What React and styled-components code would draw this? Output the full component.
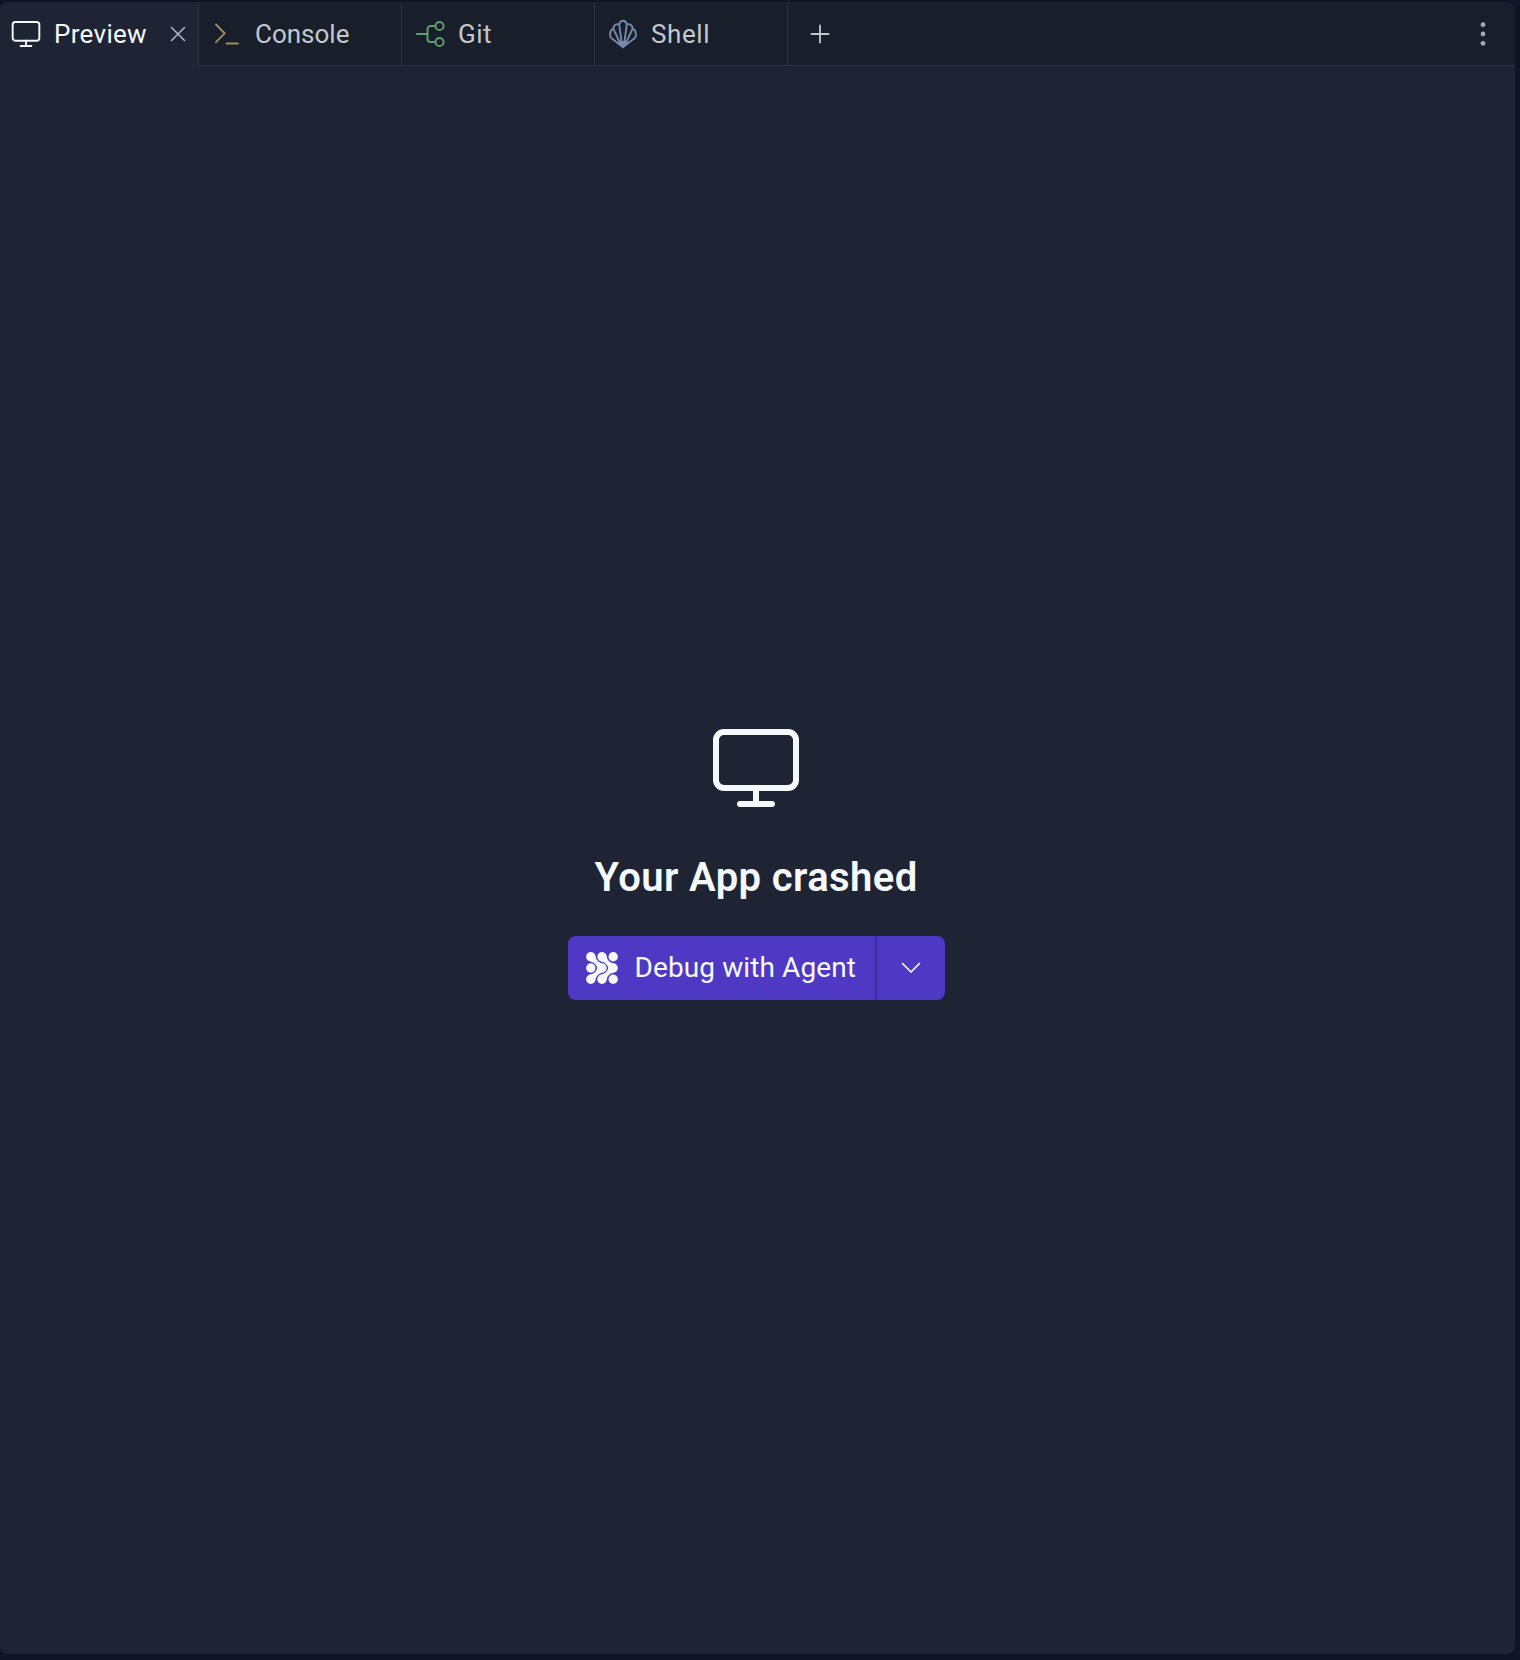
import React from "react";
import styled, { createGlobalStyle } from "styled-components";

const Global = createGlobalStyle`
  * { box-sizing: border-box; }
  body {
    margin: 0;
    background: #0f1524;
    font-family: Roboto, "Liberation Sans", sans-serif;
  }
`;

const Page = styled.div`
  height: 1660px;
  padding: 2px 5px 6px 0;
  background: #0f1524;
`;

const Panel = styled.main`
  display: flex;
  flex-direction: column;
  height: 100%;
  border-radius: 8px;
  overflow: hidden;
  background: #1e2433;
`;

const TabBar = styled.div`
  display: flex;
  flex: none;
  height: 64px;
  background: #191e2b;
`;

const Tab = styled.div`
  display: flex;
  align-items: center;
  flex: none;
  width: ${(p) => p.$width}px;
  padding-left: ${(p) => p.$pad}px;
  gap: 12px;
  border-right: 1px solid #2b3245;
  border-bottom: 1px solid ${(p) => (p.$active ? "#1e2433" : "#2b3245")};
  background: ${(p) => (p.$active ? "#1e2433" : "transparent")};
  color: ${(p) => (p.$active ? "#f5f9fc" : "#c2c8cc")};
`;

const TabLabel = styled.span`
  font-size: 26px;
  line-height: 32px;
  letter-spacing: ${(p) => p.$track || 0}px;
  white-space: nowrap;
`;

const Close = styled.button`
  display: flex;
  margin: 0 0 0 auto;
  padding: 0 12px 0 0;
  border: 0;
  background: none;
  color: #b4bac2;
`;

const Actions = styled.div`
  display: flex;
  flex: 1;
  align-items: center;
  justify-content: space-between;
  padding: 0 20px;
  border-bottom: 1px solid #2b3245;
  color: #c2c8cc;
`;

const Icon = styled.svg`
  display: block;
  flex: none;
  fill: none;
  stroke: currentColor;
  stroke-linecap: round;
  stroke-linejoin: round;
  color: ${(p) => p.$color || "inherit"};
`;

const Body = styled.section`
  display: flex;
  flex: 1;
  flex-direction: column;
  align-items: center;
  padding: 654px 3px 0 0;
  color: #f5f9fc;
`;

const Title = styled.h1`
  margin: 34px 0 0;
  font-size: 40px;
  line-height: 56px;
  font-weight: 600;
  letter-spacing: 0.4px;
  white-space: nowrap;
`;

const SplitButton = styled.div`
  display: flex;
  width: 377px;
  height: 64px;
  margin-top: 30px;
  border-radius: 8px;
  overflow: hidden;
  background: #4f39c4;
`;

const ButtonPart = styled.button`
  display: flex;
  align-items: center;
  justify-content: ${(p) => (p.$main ? "flex-start" : "center")};
  flex: ${(p) => (p.$main ? "none" : "1")};
  width: ${(p) => (p.$main ? "309px" : "auto")};
  gap: 17px;
  margin: 0;
  padding: 0 0 0 ${(p) => (p.$main ? 18 : 0)}px;
  border: 0;
  border-right: ${(p) => (p.$main ? "2px solid #3d2d99" : "0")};
  background: none;
  color: #f5f9fc;
  font: 400 28px/36px Roboto, "Liberation Sans", sans-serif;
  letter-spacing: 0.1px;
  white-space: nowrap;
`;

function Monitor({ size, stroke }) {
  return (
    <Icon width={size} height={size} viewBox="0 0 96 96" strokeWidth={stroke}>
      <rect x="8" y="12" width="80" height="56" rx="8" />
      <path d="M48 68v16M32 84h32" />
    </Icon>
  );
}

function ConsoleIcon() {
  return (
    <Icon width="32" height="32" viewBox="0 0 32 32" strokeWidth="1.9" $color="#9b8f66">
      <path d="M5 6.5l8.700 8.800L5 24.200M15.500 25.500h11.500" />
    </Icon>
  );
}

function GitIcon() {
  return (
    <Icon width="32" height="32" viewBox="0 0 32 32" strokeWidth="2" $color="#5e9e6b">
      <circle cx="25.5" cy="8" r="4.1" />
      <circle cx="25.5" cy="24" r="4.1" />
      <path d="M3 16h10.5M21.4 8h-4.9a3 3 0 0 0-3 3v10a3 3 0 0 0 3 3h4.9" />
    </Icon>
  );
}

function ShellIcon() {
  return (
    <Icon width="32" height="32" viewBox="0 0 32 32" strokeWidth="1.9" $color="#7488a8">
      <path d="M16 29.3L4.500 20.300C2.300 18.300 2.300 12.500 6.300 10.700C6.500 7.500 9 5.400 12.200 6.400C12.700 4.200 14 2.700 16 2.700S19.300 4.200 19.800 6.400C23 5.400 25.500 7.500 25.700 10.700C29.700 12.500 29.700 18.300 27.500 20.300Z" />
      <path d="M12.200 6.400L14.700 25M19.800 6.400L17.300 25M6.300 10.700L13 25M25.700 10.700L19 25" />
      <path d="M10.500 24.300L14 23h4l3.500 1.300L16 29.500Z" fill="currentColor" stroke="none" />
    </Icon>
  );
}

function AgentIcon() {
  const dots = [4.8, 16, 27.2];
  const link = "M2 8.500C6 10 8.500 10.500 10.500 14L12.400 18.500L18.500 12.400L14 10.500C10.500 8.500 10 6 8.500 2Z";
  return (
    <Icon width="32" height="32" viewBox="0 0 32 32">
      <g fill="currentColor" stroke="none">
        {dots.map((x) => dots.map((y) => <circle key={`${x}-${y}`} cx={x} cy={y} r="4.7" />))}
        <path d={link} />
        <path d={link} transform="translate(11 0)" />
        <path d={link} transform="matrix(1 0 0 -1 0 32)" />
        <path d={link} transform="matrix(1 0 0 -1 11 32)" />
      </g>
    </Icon>
  );
}

export default function App() {
  return (
    <>
      <Global />
      <Page>
        <Panel>
          <TabBar>
            <Tab $active $width={199} $pad={10}>
              <Monitor size={32} stroke={5.8} />
              <TabLabel $track={0.3}>Preview</TabLabel>
              <Close aria-label="Close tab">
                <Icon width="16" height="16" viewBox="0 0 16 16" strokeWidth="1.5">
                  <path d="M1.500 1.500l13 13M14.500 1.500l-13 13" />
                </Icon>
              </Close>
            </Tab>
            <Tab $width={203} $pad={12}>
              <ConsoleIcon />
              <TabLabel>Console</TabLabel>
            </Tab>
            <Tab $width={193} $pad={12}>
              <GitIcon />
              <TabLabel $track={0.5}>Git</TabLabel>
            </Tab>
            <Tab $width={193} $pad={12}>
              <ShellIcon />
              <TabLabel $track={0.6}>Shell</TabLabel>
            </Tab>
            <Actions>
              <Icon width="24" height="24" viewBox="0 0 24 24" strokeWidth="1.8">
                <path d="M12 3.500v17M3.500 12h17" />
              </Icon>
              <Icon width="24" height="24" viewBox="0 0 24 24" $color="#a3a9b2">
                <g fill="currentColor" stroke="none">
                  <circle cx="12" cy="2.700" r="2.400" />
                  <circle cx="12" cy="12" r="2.400" />
                  <circle cx="12" cy="21.300" r="2.400" />
                </g>
              </Icon>
            </Actions>
          </TabBar>
          <Body>
            <Monitor size={96} stroke={6} />
            <Title>Your App crashed</Title>
            <SplitButton>
              <ButtonPart $main>
                <AgentIcon />
                <span>Debug with Agent</span>
              </ButtonPart>
              <ButtonPart aria-label="More options">
                <Icon width="20" height="12" viewBox="0 0 20 12" strokeWidth="1.7">
                  <path d="M1.500 1.500L10 10l8.500-8.500" />
                </Icon>
              </ButtonPart>
            </SplitButton>
          </Body>
        </Panel>
      </Page>
    </>
  );
}
